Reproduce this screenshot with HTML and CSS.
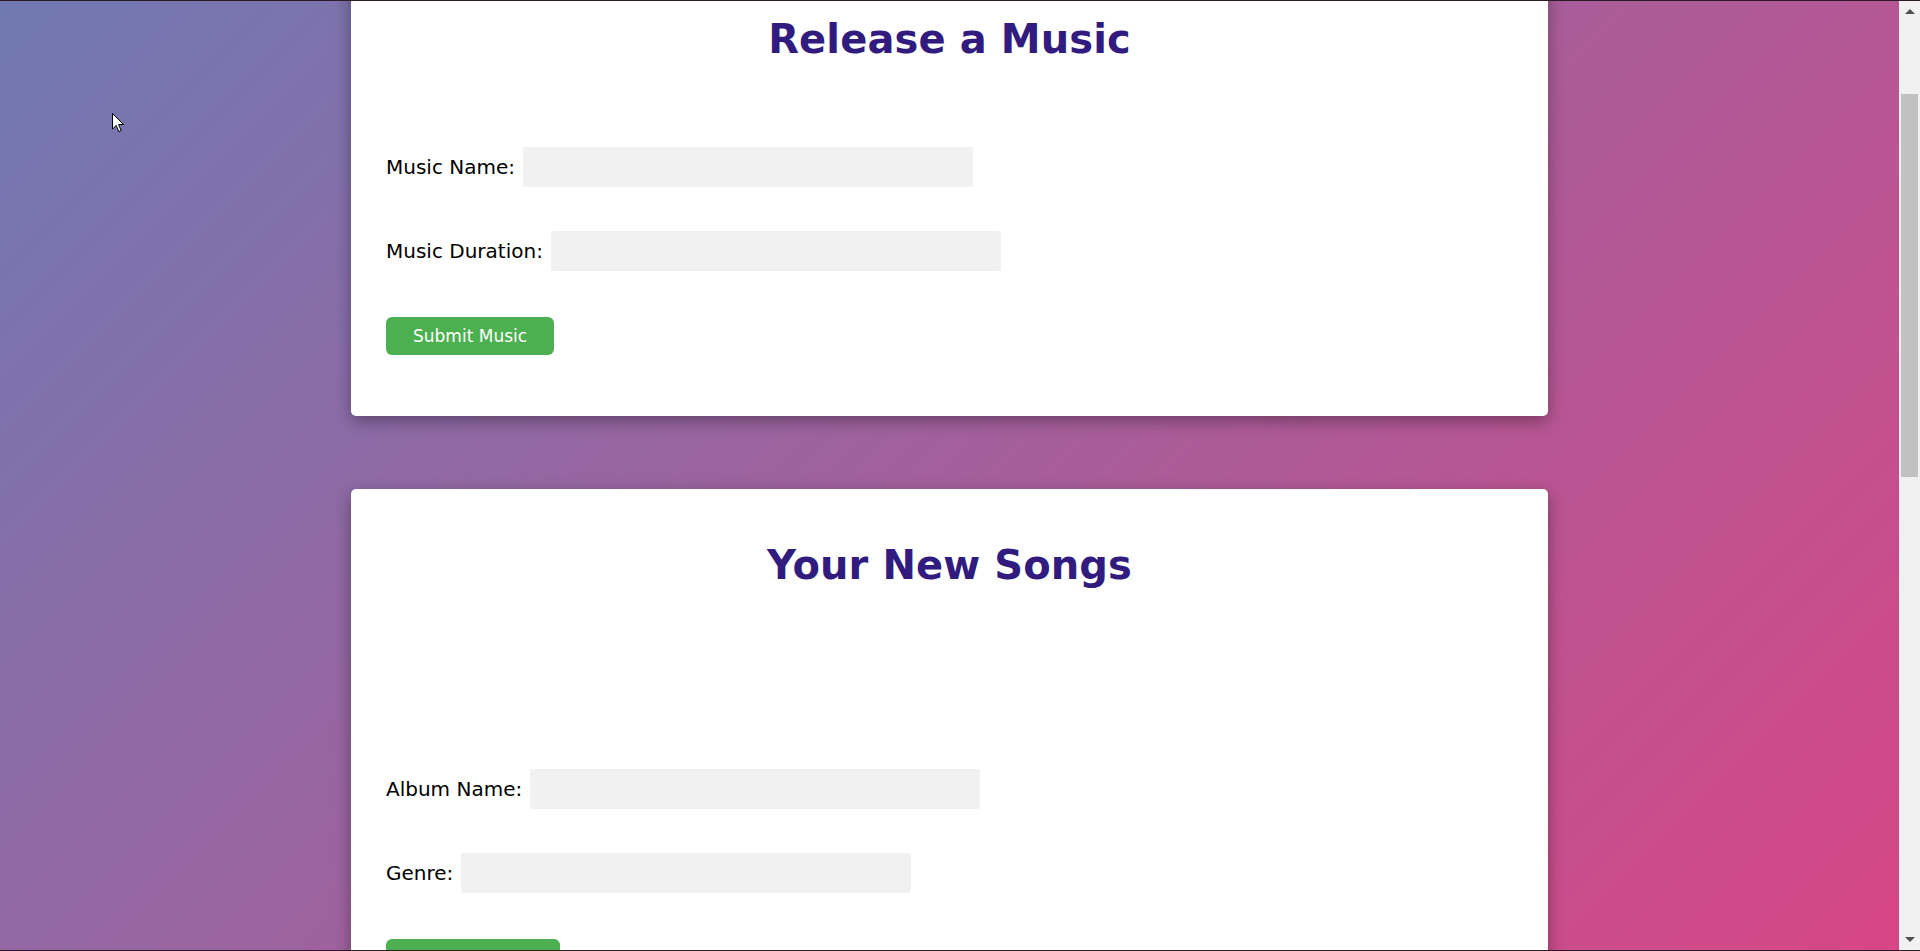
FILE: index.html
```html
<!DOCTYPE html>
<html lang="en">
<head>
<meta charset="utf-8">
<title>Release a Music</title>
<link rel="stylesheet" href="styles.css">
</head>
<body>
<div class="window">
  <div class="viewport">
    <main class="page">
      <section class="card card-first">
        <h1 class="card-title">Release a Music</h1>
        <form class="form">
          <div class="field">
            <label class="field-label" for="music-name">Music Name:</label>
            <input class="field-input" id="music-name" type="text">
          </div>
          <div class="field">
            <label class="field-label" for="music-duration">Music Duration:</label>
            <input class="field-input" id="music-duration" type="text">
          </div>
          <button class="submit" type="button">Submit Music</button>
        </form>
      </section>
      <section class="card">
        <h1 class="card-title">Your New Songs</h1>
        <div class="song-list"></div>
        <form class="form">
          <div class="field">
            <label class="field-label" for="album-name">Album Name:</label>
            <input class="field-input" id="album-name" type="text">
          </div>
          <div class="field">
            <label class="field-label" for="genre">Genre:</label>
            <input class="field-input field-input-genre" id="genre" type="text">
          </div>
          <button class="submit" type="button">Submit Album</button>
        </form>
      </section>
    </main>
    <svg class="cursor" width="13" height="20" viewBox="0 0 13 20" aria-hidden="true">
      <path d="M0.5 0.5 L0.5 16 L4.2 12.4 L6.8 18.6 L9.2 17.6 L6.6 11.5 L11.6 11.5 Z" fill="#fff" stroke="#000" stroke-width="1"/>
    </svg>
  </div>
  <div class="scrollbar">
    <div class="scroll-btn"><span class="arrow-up"></span></div>
    <div class="scroll-track"><div class="scroll-thumb"></div></div>
    <div class="scroll-btn"><span class="arrow-down"></span></div>
  </div>
</div>
</body>
</html>
```

FILE: styles.css
```css
* {
  box-sizing: border-box;
}

html, body {
  margin: 0;
  padding: 0;
  height: 951px;
  overflow: hidden;
}

body {
  font-family: "DejaVu Sans", Verdana, sans-serif;
  background: #2b1b25;
  border-top: 1px solid #2b1b25;
  border-bottom: 1px solid #2b1b25;
}

.window {
  display: flex;
  height: 949px;
}

.viewport {
  position: relative;
  flex: 1;
  overflow: hidden;
  background: linear-gradient(135deg, #7079b2 0%, #d74686 100%);
}

.page {
  display: flex;
  flex-direction: column;
  align-items: center;
  gap: 73px;
}

.card {
  width: 1197px;
  background: #ffffff;
  border-radius: 5px;
  box-shadow: 0 5px 16px rgba(0, 0, 0, 0.35);
  padding: 52px 35px 61px;
}

.card-first {
  margin-top: -38px;
}

.card-title {
  margin: 0 0 84px;
  font-size: 40px;
  line-height: 48px;
  font-weight: bold;
  text-align: center;
  color: #311b7e;
  letter-spacing: 0.1px;
}

.song-list {
  height: 96px;
}

.form {
  display: flex;
  flex-direction: column;
  align-items: flex-start;
  gap: 44px;
}

.field {
  display: flex;
  align-items: center;
  gap: 8px;
  height: 40px;
}

.field-label {
  font-size: 20px;
  color: #000;
}

.field-input {
  width: 450px;
  height: 40px;
  border: none;
  border-radius: 2px;
  background: #f1f1f1;
  padding: 0 10px;
  font: inherit;
}

.submit {
  margin-top: 2px;
  height: 38px;
  padding: 0 27px;
  border: none;
  border-radius: 6px;
  background: #4caf50;
  color: #fff;
  font-family: "DejaVu Sans", Verdana, sans-serif;
  font-size: 17px;
}

.cursor {
  position: absolute;
  left: 112px;
  top: 112px;
}

.scrollbar {
  width: 21px;
  display: flex;
  flex-direction: column;
  background: #f1f1f1;
}

.scroll-btn {
  height: 21px;
  display: flex;
  align-items: center;
  justify-content: center;
}

.arrow-up {
  width: 0;
  height: 0;
  border-left: 5px solid transparent;
  border-right: 5px solid transparent;
  border-bottom: 5px solid #505050;
}

.arrow-down {
  width: 0;
  height: 0;
  border-left: 5px solid transparent;
  border-right: 5px solid transparent;
  border-top: 5px solid #505050;
}

.scroll-track {
  flex: 1;
  padding: 72px 2px 0 2px;
}

.scroll-thumb {
  height: 383px;
  background: #c1c1c1;
}
```
